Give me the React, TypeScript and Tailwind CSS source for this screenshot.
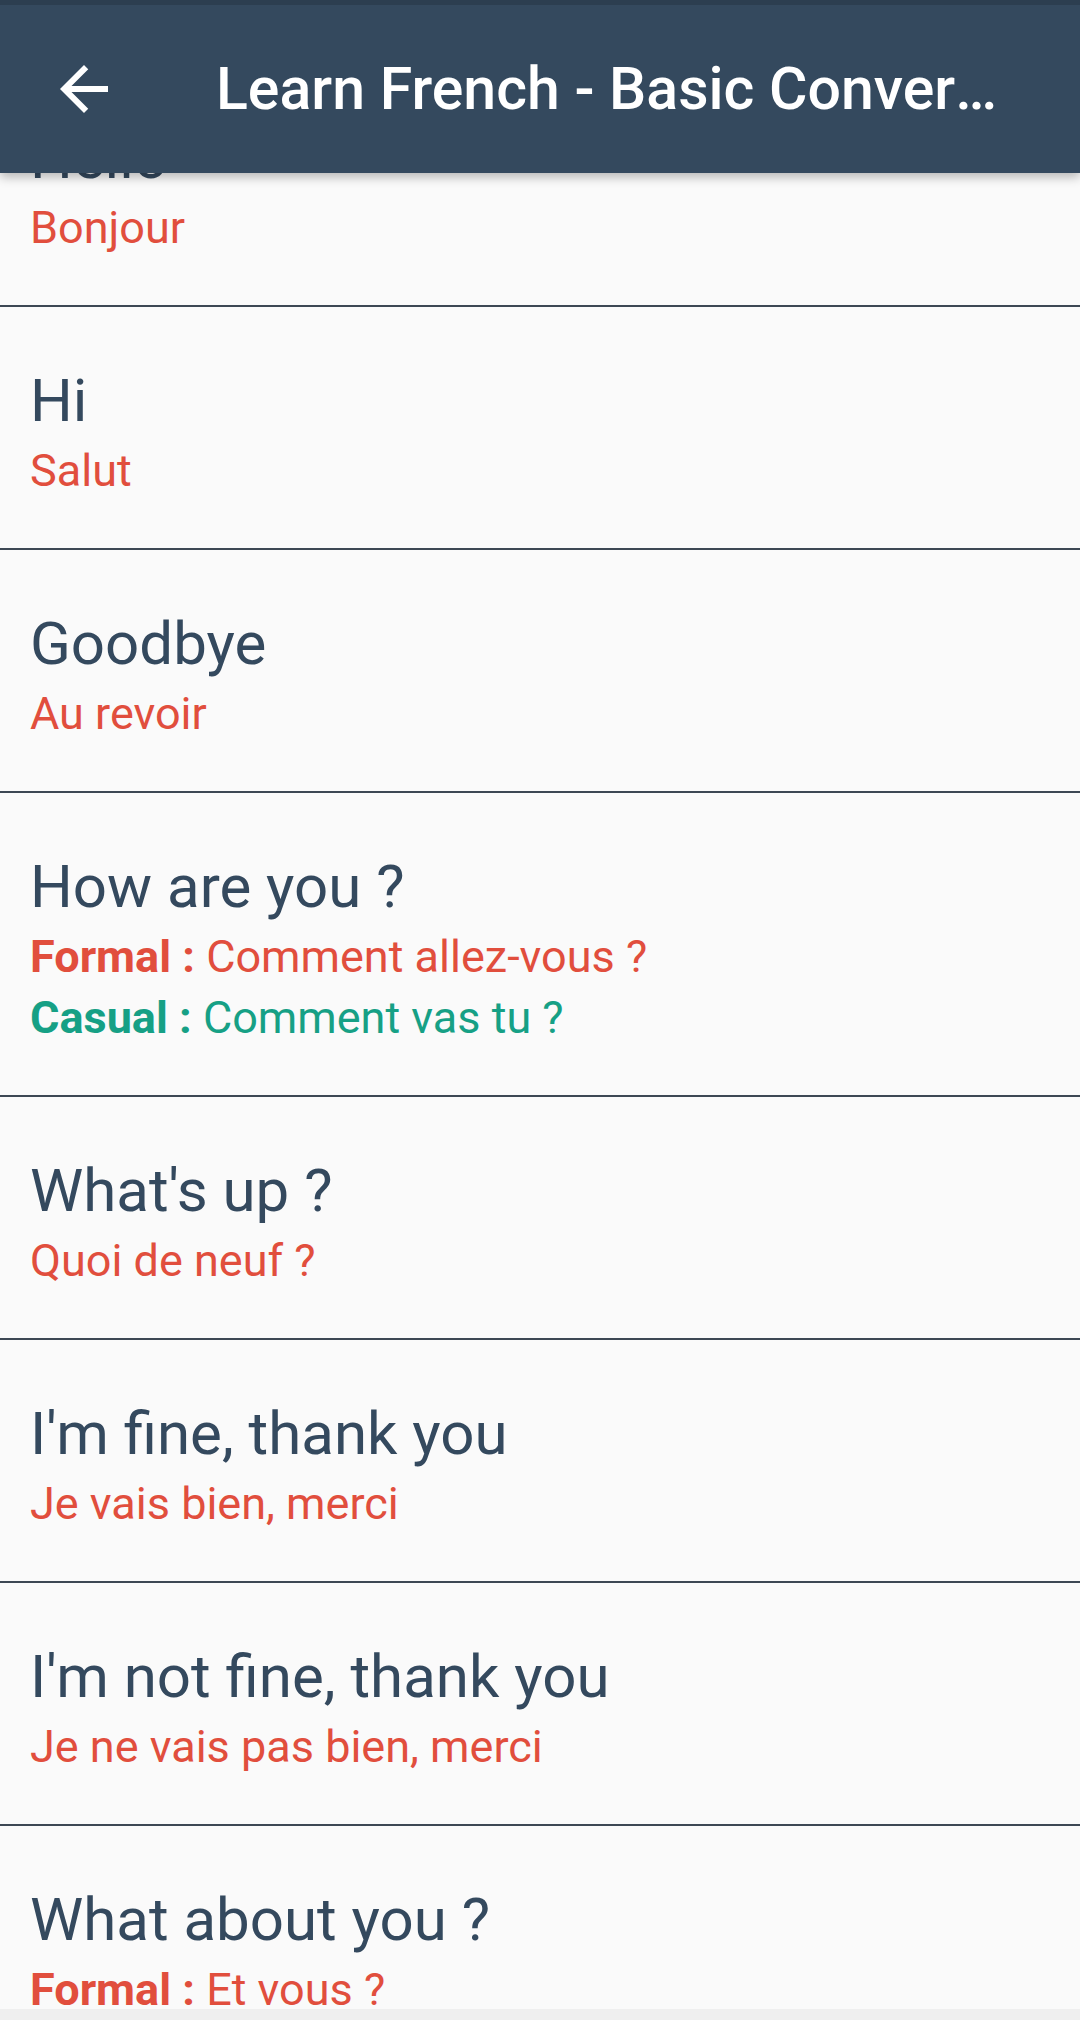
import { ReactNode } from "react";

type Phrase = {
  en: string;
  fr?: string;
  formal?: string;
  casual?: string;
};

const phrases: Phrase[] = [
  { en: "Hello", fr: "Bonjour" },
  { en: "Hi", fr: "Salut" },
  { en: "Goodbye", fr: "Au revoir" },
  { en: "How are you ?", formal: "Comment allez-vous ?", casual: "Comment vas tu ?" },
  { en: "What's up ?", fr: "Quoi de neuf ?" },
  { en: "I'm fine, thank you", fr: "Je vais bien, merci" },
  { en: "I'm not fine, thank you", fr: "Je ne vais pas bien, merci" },
  { en: "What about you ?", formal: "Et vous ?", casual: "Et toi ?" },
];

function Line({ children, className }: { children: ReactNode; className: string }) {
  return <p className={"text-[45px] leading-[61px] whitespace-nowrap " + className}>{children}</p>;
}

function PhraseRow({ p }: { p: Phrase }) {
  return (
    <li className="border-b-2 border-[#3d4854] pl-[30px] pt-[59px] pb-[47px]">
      <p className="text-[60px] leading-[70px] text-[#34495e] whitespace-nowrap">{p.en}</p>
      <div className="mt-[4px]">
        {p.fr && <Line className="text-[#e14e3d]">{p.fr}</Line>}
        {p.formal && (
          <Line className="text-[#e14e3d]">
            <span className="font-bold">Formal :</span> {p.formal}
          </Line>
        )}
        {p.casual && (
          <Line className="text-[#16a085]">
            <span className="font-bold">Casual :</span> {p.casual}
          </Line>
        )}
      </div>
    </li>
  );
}

export default function App() {
  return (
    <div
      className="flex flex-col h-[2020px] w-[1080px] overflow-hidden bg-[#fafafa]"
      style={{ fontFamily: "Roboto, 'Noto Sans', sans-serif" }}
    >
      <div className="relative z-10 shadow-[0_4px_10px_rgba(0,0,0,0.28)]">
        <div className="h-[5px] bg-[#2c3e50]" />
        <header className="h-[168px] bg-[#34495e] flex items-center">
          <button className="ml-[48px] w-[72px] h-[72px] flex items-center justify-center text-white">
            <svg viewBox="0 0 24 24" width="72" height="72" fill="currentColor">
              <path d="M20 11H7.83l5.59-5.59L12 4l-8 8 8 8 1.41-1.41L7.83 13H20v-2z" />
            </svg>
          </button>
          <h1 className="ml-[96px] mr-[70px] flex-1 min-w-0 truncate text-white text-[59px] font-medium leading-[70px]">
            Learn French - Basic Conversation
          </h1>
        </header>
      </div>

      <div className="flex-1 overflow-hidden">
        <ul className="mt-[-109px]">
          {phrases.map((p) => (
            <PhraseRow key={p.en} p={p} />
          ))}
        </ul>
      </div>

      <div className="h-[11px] bg-[#efefef]" />
    </div>
  );
}
